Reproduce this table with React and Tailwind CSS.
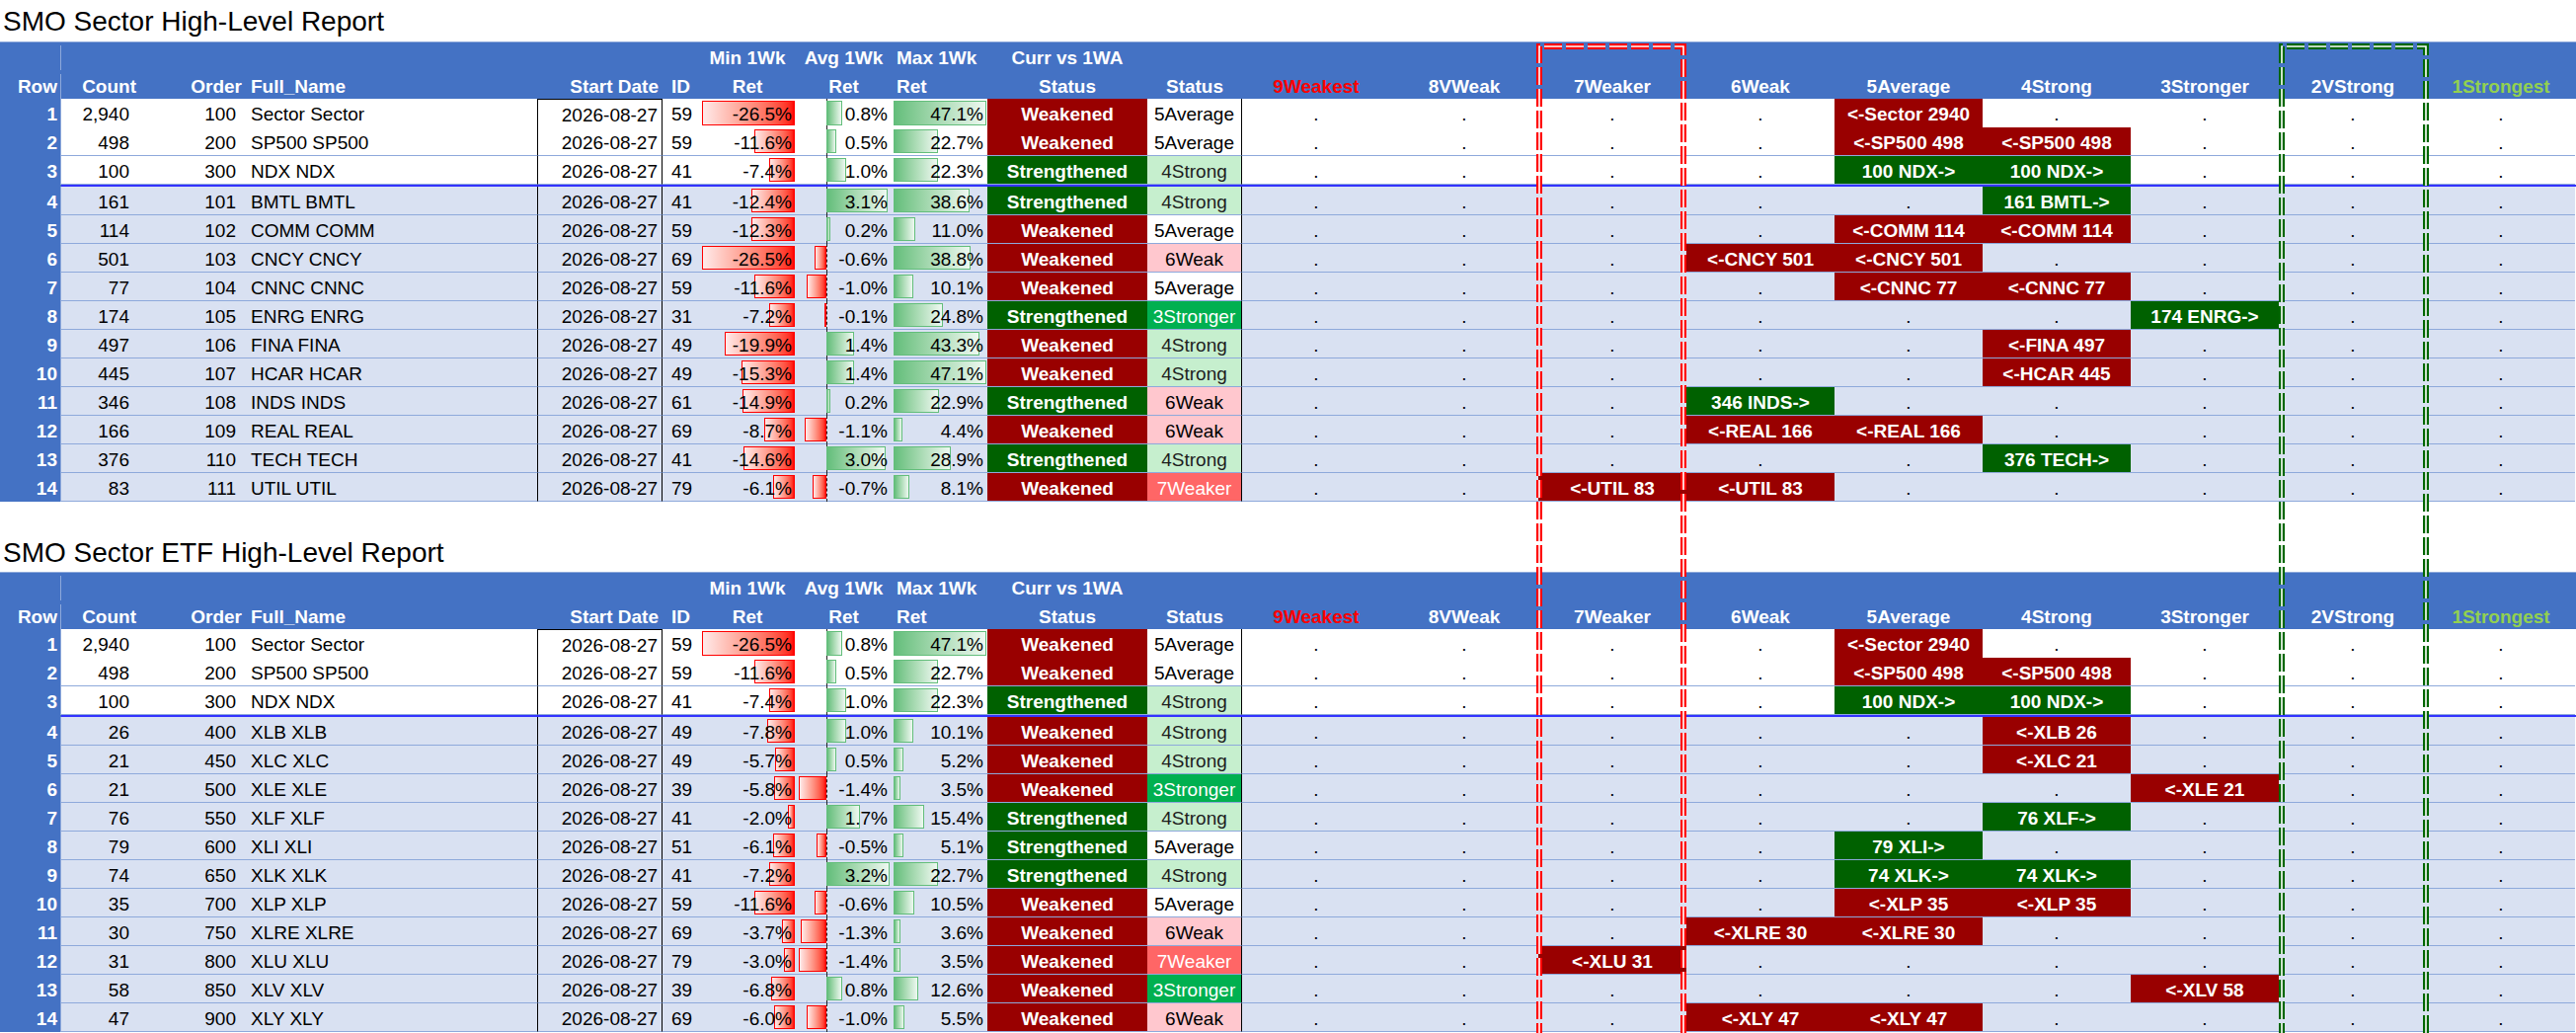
import React from 'react';

const COLS =
  'grid grid-cols-[62px_80px_103px_299px_127px_37px_98px_97px_97px_162px_96px_repeat(9,150px)]';

const LEVELS = [9, 8, 7, 6, 5, 4, 3, 2, 1];
const LEVEL_NAMES = ['9Weakest', '8VWeak', '7Weaker', '6Weak', '5Average', '4Strong', '3Stronger', '2VStrong', '1Strongest'];

const HEAD = [
  [1, '2,940', 100, 'Sector Sector', 59, -26.5, 0.8, 47.1, 'W', '5Average', { 5: '<-Sector 2940' }],
  [2, '498', 200, 'SP500 SP500', 59, -11.6, 0.5, 22.7, 'W', '5Average', { 5: '<-SP500 498', 4: '<-SP500 498' }],
  [3, '100', 300, 'NDX NDX', 41, -7.4, 1.0, 22.3, 'S', '4Strong', { 5: '100 NDX->', 4: '100 NDX->' }],
];

const SECTORS = [
  ...HEAD,
  [4, '161', 101, 'BMTL BMTL', 41, -12.4, 3.1, 38.6, 'S', '4Strong', { 4: '161 BMTL->' }],
  [5, '114', 102, 'COMM COMM', 59, -12.3, 0.2, 11.0, 'W', '5Average', { 5: '<-COMM 114', 4: '<-COMM 114' }],
  [6, '501', 103, 'CNCY CNCY', 69, -26.5, -0.6, 38.8, 'W', '6Weak', { 6: '<-CNCY 501', 5: '<-CNCY 501' }],
  [7, '77', 104, 'CNNC CNNC', 59, -11.6, -1.0, 10.1, 'W', '5Average', { 5: '<-CNNC 77', 4: '<-CNNC 77' }],
  [8, '174', 105, 'ENRG ENRG', 31, -7.2, -0.1, 24.8, 'S', '3Stronger', { 3: '174 ENRG->' }],
  [9, '497', 106, 'FINA FINA', 49, -19.9, 1.4, 43.3, 'W', '4Strong', { 4: '<-FINA 497' }],
  [10, '445', 107, 'HCAR HCAR', 49, -15.3, 1.4, 47.1, 'W', '4Strong', { 4: '<-HCAR 445' }],
  [11, '346', 108, 'INDS INDS', 61, -14.9, 0.2, 22.9, 'S', '6Weak', { 6: '346 INDS->' }],
  [12, '166', 109, 'REAL REAL', 69, -8.7, -1.1, 4.4, 'W', '6Weak', { 6: '<-REAL 166', 5: '<-REAL 166' }],
  [13, '376', 110, 'TECH TECH', 41, -14.6, 3.0, 28.9, 'S', '4Strong', { 4: '376 TECH->' }],
  [14, '83', 111, 'UTIL UTIL', 79, -6.1, -0.7, 8.1, 'W', '7Weaker', { 7: '<-UTIL 83', 6: '<-UTIL 83' }],
];

const ETFS = [
  ...HEAD,
  [4, '26', 400, 'XLB XLB', 49, -7.8, 1.0, 10.1, 'W', '4Strong', { 4: '<-XLB 26' }],
  [5, '21', 450, 'XLC XLC', 49, -5.7, 0.5, 5.2, 'W', '4Strong', { 4: '<-XLC 21' }],
  [6, '21', 500, 'XLE XLE', 39, -5.8, -1.4, 3.5, 'W', '3Stronger', { 3: '<-XLE 21' }],
  [7, '76', 550, 'XLF XLF', 41, -2.0, 1.7, 15.4, 'S', '4Strong', { 4: '76 XLF->' }],
  [8, '79', 600, 'XLI XLI', 51, -6.1, -0.5, 5.1, 'S', '5Average', { 5: '79 XLI->' }],
  [9, '74', 650, 'XLK XLK', 41, -7.2, 3.2, 22.7, 'S', '4Strong', { 5: '74 XLK->', 4: '74 XLK->' }],
  [10, '35', 700, 'XLP XLP', 59, -11.6, -0.6, 10.5, 'W', '5Average', { 5: '<-XLP 35', 4: '<-XLP 35' }],
  [11, '30', 750, 'XLRE XLRE', 69, -3.7, -1.3, 3.6, 'W', '6Weak', { 6: '<-XLRE 30', 5: '<-XLRE 30' }],
  [12, '31', 800, 'XLU XLU', 79, -3.0, -1.4, 3.5, 'W', '7Weaker', { 7: '<-XLU 31' }],
  [13, '58', 850, 'XLV XLV', 39, -6.8, 0.8, 12.6, 'W', '3Stronger', { 3: '<-XLV 58' }],
  [14, '47', 900, 'XLY XLY', 69, -6.0, -1.0, 5.5, 'W', '6Weak', { 6: '<-XLY 47', 5: '<-XLY 47' }],
];

const STATUS2 = {
  '5Average': 'bg-white text-black',
  '4Strong': 'bg-[#C6EFCE] text-[#1d1d1d]',
  '6Weak': 'bg-[#FFC7CE] text-black',
  '3Stronger': 'bg-[#00B050] text-white',
  '7Weaker': 'bg-[#FF6666] text-white',
};

const pct = (v) => v.toFixed(1) + '%';

function Header() {
  return (
    <div className="border-t border-[#8EA9DB] bg-[#4472C4] text-white font-bold">
      <div className={`${COLS} h-[28px] pt-[3px] leading-[25px]`}>
        <div className="border-r border-[#8EA9DB]" />
        <div />
        <div />
        <div />
        <div />
        <div />
        <div className="text-center">Min 1Wk</div>
        <div className="text-center">Avg 1Wk</div>
        <div className="pl-[5px]">Max 1Wk</div>
        <div className="text-center">Curr vs 1WA</div>
      </div>
      <div className={`${COLS} h-[29px] pt-[4px] leading-[25px]`}>
        <div className="text-right pr-[3px] border-r border-[#8EA9DB]">Row</div>
        <div className="text-right pr-[4px]">Count</div>
        <div className="text-right">Order</div>
        <div className="pl-[9px]">Full_Name</div>
        <div className="text-right pr-[4px]">Start Date</div>
        <div className="pl-[9px]">ID</div>
        <div className="text-center">Ret</div>
        <div className="text-center">Ret</div>
        <div className="pl-[5px]">Ret</div>
        <div className="text-center">Status</div>
        <div className="text-center">Status</div>
        {LEVEL_NAMES.map((n) => (
          <div
            key={n}
            className={`text-center ${
              n === '9Weakest' ? 'text-[#FF0000]' : n === '1Strongest' ? 'text-[#92D050]' : ''
            }`}
          >
            {n}
          </div>
        ))}
      </div>
    </div>
  );
}

function DataRow({ r, white, first }) {
  const [n, count, order, name, id, mn, avg, mx, st, st2, hits] = r;
  const bg = white ? 'bg-white' : 'bg-[#D9E1F2]';
  const line = 'border-b border-[#8EA9DB] pt-[3px] leading-[25px]';
  const cell = `${bg} ${line}`;
  return (
    <div className={`${COLS} h-[29px]`}>
      <div className="bg-[#4472C4] text-white font-bold text-right pr-[3px] pt-[3px] leading-[25px] border-r border-[#8EA9DB]">
        {n}
      </div>
      <div className={`${cell} text-right pr-[11px]`}>{count}</div>
      <div className={`${cell} text-right pr-[6px]`}>{order}</div>
      <div className={`${cell} pl-[9px]`}>{name}</div>
      <div className={`${cell} text-right pr-[4px] border-x border-x-black ${first ? 'border-t border-t-black' : ''}`}>
        2026-08-27
      </div>
      <div className={`${cell} pl-[9px]`}>{id}</div>

      {/* Min 1Wk Ret */}
      <div className={`${cell} relative text-right pr-[4px]`}>
        <div
          className="absolute right-[1px] top-[2px] bottom-[2px] border border-[#FF0000] bg-linear-to-r from-[#FFEAEA] to-[#FF0000]"
          style={{ width: Math.abs(mn) * 3.55 }}
        />
        <span className="relative">{pct(mn)}</span>
      </div>

      {/* Avg 1Wk Ret */}
      <div className={`${cell} relative text-right pr-[4px]`}>
        <div className="absolute left-[31px] top-0 bottom-[-1px] border-l border-dashed border-[#222]" />
        {avg >= 0 ? (
          <div
            className="absolute left-[31px] top-[2px] bottom-[2px] border border-[#63BE7B] bg-linear-to-r from-[#63BE7B] to-[#EEF8F1]"
            style={{ width: avg * 20 }}
          />
        ) : (
          <div
            className="absolute right-[66px] top-[2px] bottom-[2px] border border-[#FF0000] bg-linear-to-r from-[#FFEAEA] to-[#FF0000]"
            style={{ width: -avg * 20 }}
          />
        )}
        <span className="relative">{pct(avg)}</span>
      </div>

      {/* Max 1Wk Ret */}
      <div className={`${cell} relative text-right pr-[4px]`}>
        <div
          className="absolute left-[2px] top-[2px] bottom-[2px] border border-[#63BE7B] bg-linear-to-r from-[#63BE7B] to-[#EEF8F1]"
          style={{ width: mx * 2 }}
        />
        <span className="relative">{pct(mx)}</span>
      </div>

      <div className={`${st === 'W' ? 'bg-[#990000]' : 'bg-[#006100]'} ${line} text-white font-bold text-center`}>
        {st === 'W' ? 'Weakened' : 'Strengthened'}
      </div>
      <div className={`${STATUS2[st2]} ${line} text-center border-r border-r-black`}>{st2}</div>

      {LEVELS.map((lvl) =>
        hits[lvl] ? (
          <div
            key={lvl}
            className={`${
              hits[lvl].startsWith('<-') ? 'bg-[#990000]' : 'bg-[#006100]'
            } ${line} text-white font-bold text-center`}
          >
            {hits[lvl]}
          </div>
        ) : (
          <div key={lvl} className={`${cell} text-center`}>
            .
          </div>
        )
      )}
    </div>
  );
}

function Report({ rows }) {
  return (
    <div>
      <Header />
      {rows.map((r, i) => (
        <React.Fragment key={r[0]}>
          <DataRow r={r} white={i < 3} first={i === 0} />
          {i === 2 && (
            <div className="flex h-[2px]">
              <div className="w-[62px] bg-[#4472C4]" />
              <div className="flex-1 bg-[#3333FF]" />
            </div>
          )}
        </React.Fragment>
      ))}
    </div>
  );
}

function DashedBox({ left, color }) {
  return (
    <svg className={`absolute top-[44px] ${left}`} width="152" height="1010">
      <path d="M3 1010 V3 H149 V1010" fill="none" stroke={color} strokeWidth="6" strokeDasharray="18 4" />
      <path d="M3 1010 V3 H149 V1010" fill="none" stroke="#ffffff" strokeWidth="1.6" strokeDasharray="18 4" />
    </svg>
  );
}

export default function App() {
  return (
    <div className="relative w-[2609px] h-[1046px] overflow-hidden bg-white text-black font-['Liberation_Sans',Arial,sans-serif] text-[19px]">
      <div className="h-[42px] pt-[8px] pl-[3px] text-[28px] leading-[28px]">SMO Sector High-Level Report</div>
      <Report rows={SECTORS} />
      <div className="h-[71px] pt-[38px] pl-[3px] text-[28px] leading-[28px]">SMO Sector ETF High-Level Report</div>
      <Report rows={ETFS} />

      <DashedBox left="left-[1556px]" color="#FF0000" />
      <DashedBox left="left-[2308px]" color="#006600" />
    </div>
  );
}
